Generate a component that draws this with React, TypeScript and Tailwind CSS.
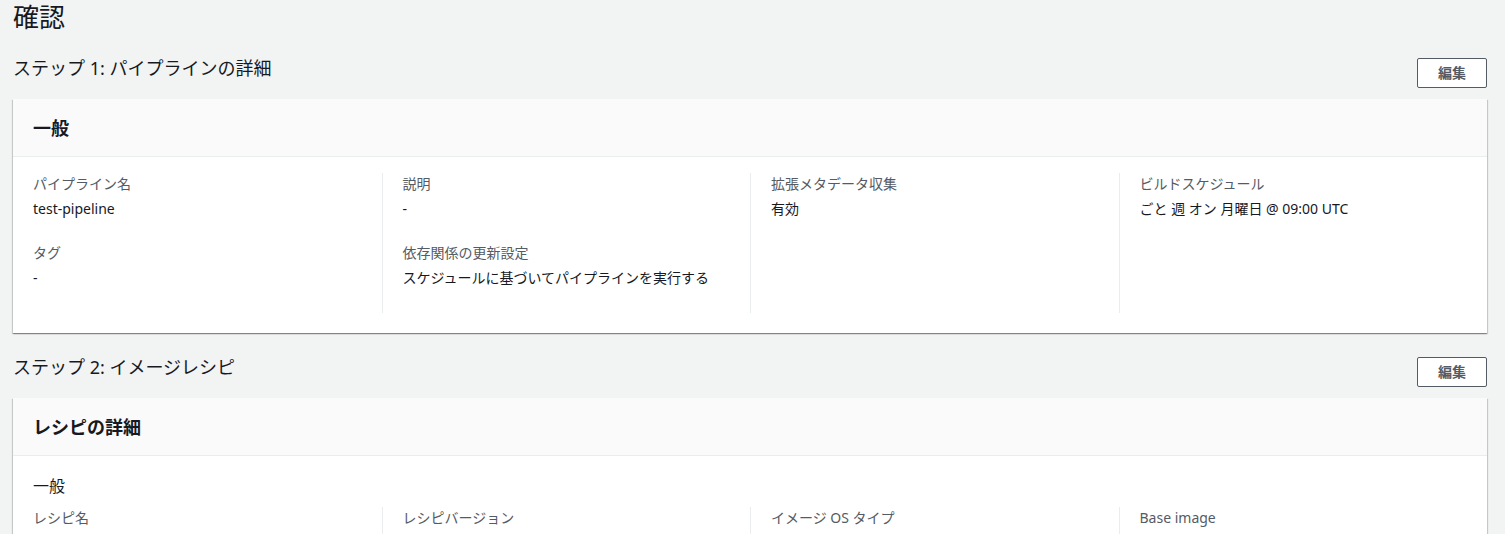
import React from "react";

const font = { fontFamily: '"Noto Sans", "Noto Sans CJK JP", sans-serif' };

function KV({ label, value }: { label: string; value: string }) {
  return (
    <div className="mb-[22px]">
      <div className="text-[14px] leading-[22px] text-[#545b64]">{label}</div>
      <div className="mt-[3px] text-[14px] leading-[22px] text-[#16191f]">{value}</div>
    </div>
  );
}

function Col({ first, children, className = "" }: { first?: boolean; children?: React.ReactNode; className?: string }) {
  return (
    <div className={"pl-[20px] pr-[20px] " + (first ? "" : "border-l border-[#eaeded] ") + className}>
      {children}
    </div>
  );
}

function StepHeader({ title }: { title: string }) {
  return (
    <div className="flex items-start justify-between">
      <div className="text-[18px] leading-[22px] text-[#16191f]">{title}</div>
      <button className="mt-[1px] h-[30px] w-[70px] rounded-[2px] border border-[#545b64] bg-white text-[14px] font-bold leading-[20px] text-[#545b64]">
        編集
      </button>
    </div>
  );
}

function Card({ title, children }: { title: string; children: React.ReactNode }) {
  return (
    <div className="bg-white shadow-[0_1px_1px_0_rgba(0,28,36,0.3),1px_1px_1px_0_rgba(0,28,36,0.15),-1px_1px_1px_0_rgba(0,28,36,0.15)]">
      <div className="flex h-[58px] items-center border-b border-[#eaeded] bg-[#fafafa] px-[20px]">
        <div className="text-[18px] font-bold leading-[22px] text-[#16191f]">{title}</div>
      </div>
      {children}
    </div>
  );
}

export default function App() {
  return (
    <div className="h-[534px] overflow-hidden bg-[#f2f3f3] pl-[13px] pr-[18px]" style={font}>
      <h1 className="pt-0 text-[26px] leading-[34px] text-[#16191f]">確認</h1>
      <div className="mt-[23px]">
        <StepHeader title="ステップ 1: パイプラインの詳細" />
      </div>
      <div className="mt-[11px]">
        <Card title="一般">
          <div className="grid grid-cols-4 pt-[16px] pb-[20px]">
            <Col first className="pb-[2px]">
              <KV label="パイプライン名" value="test-pipeline" />
              <KV label="タグ" value="-" />
            </Col>
            <Col className="pb-[2px]">
              <KV label="説明" value="-" />
              <KV label="依存関係の更新設定" value="スケジュールに基づいてパイプラインを実行する" />
            </Col>
            <Col>
              <KV label="拡張メタデータ収集" value="有効" />
            </Col>
            <Col>
              <KV label="ビルドスケジュール" value="ごと 週 オン 月曜日 @ 09:00 UTC" />
            </Col>
          </div>
        </Card>
      </div>
      <div className="mt-[23px]">
        <StepHeader title="ステップ 2: イメージレシピ" />
      </div>
      <div className="mt-[11px]">
        <Card title="レシピの詳細">
          <div className="px-[20px] pt-[19px] text-[16px] leading-[22px] text-[#16191f]">一般</div>
          <div className="mt-[10px] grid grid-cols-4 pb-[20px]">
            <Col first>
              <KV label="レシピ名" value="test-recipe" />
            </Col>
            <Col>
              <KV label="レシピバージョン" value="1.0.0" />
            </Col>
            <Col>
              <KV label="イメージ OS タイプ" value="Linux" />
            </Col>
            <Col>
              <KV label="Base image" value="-" />
            </Col>
          </div>
        </Card>
      </div>
    </div>
  );
}
